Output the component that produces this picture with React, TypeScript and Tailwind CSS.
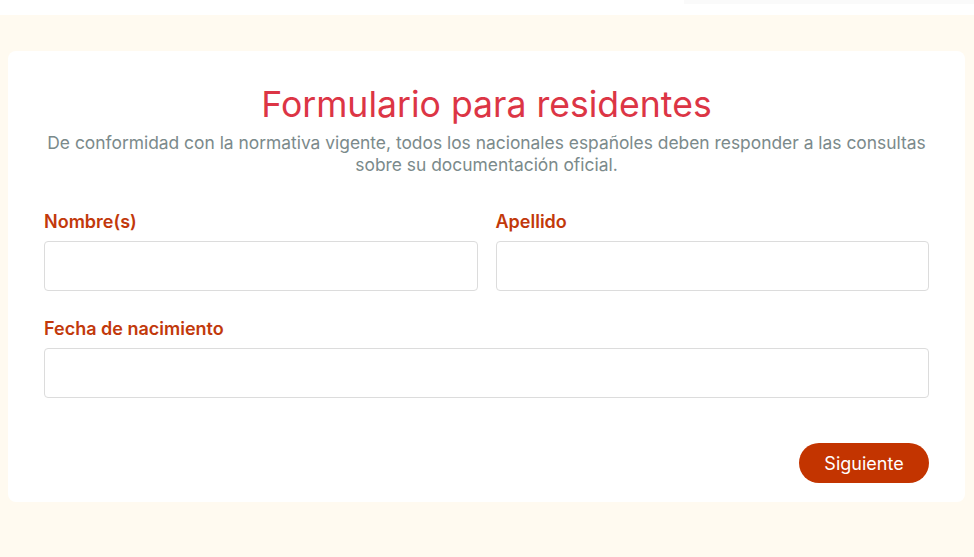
import React from "react";

export default function App() {
  return (
    <div className="min-h-[557px] bg-[#fffaf0]" style={{ fontFamily: "Inter, 'Noto Sans', sans-serif" }}>
      <header className="h-[15px] bg-white flex justify-end">
        <div className="w-[290px] h-[4px] bg-[#fafafa]" />
      </header>
      <main className="pt-[36px] pl-[8px] pr-[9px]">
        <section className="bg-white rounded-[8px] px-[36px] pt-[34px] pb-[19px]">
          <h1 className="text-center text-[35.6px] leading-[40px] text-[#dc3545]">Formulario para residentes</h1>
          <p className="text-center text-[17.4px] leading-[22px] text-[#7b8a8b] mt-[7px]">
            De conformidad con la normativa vigente, todos los nacionales españoles deben responder a las consultas sobre su documentación oficial.
          </p>
          <form className="mt-[34px]" onSubmit={(e) => e.preventDefault()}>
            <div className="grid grid-cols-2 gap-x-[18px]">
              <div>
                <label className="block text-[18px] leading-[24px] font-semibold text-[#c2390b] mb-[7px]">Nombre(s)</label>
                <input className="block w-full h-[50px] border border-[#dcdcdc] rounded-[4px] px-3" />
              </div>
              <div>
                <label className="block text-[18px] leading-[24px] font-semibold text-[#c2390b] mb-[7px]">Apellido</label>
                <input className="block w-full h-[50px] border border-[#dcdcdc] rounded-[4px] px-3" />
              </div>
            </div>
            <div className="mt-[26px]">
              <label className="block text-[18px] leading-[24px] font-semibold text-[#c2390b] mb-[7px]">Fecha de nacimiento</label>
              <input className="block w-full h-[50px] border border-[#dcdcdc] rounded-[4px] px-3" />
            </div>
            <div className="flex justify-end mt-[45px]">
              <button type="submit" className="h-[40px] w-[130px] rounded-full bg-[#c33400] text-white text-[18px]">Siguiente</button>
            </div>
          </form>
        </section>
      </main>
    </div>
  );
}
